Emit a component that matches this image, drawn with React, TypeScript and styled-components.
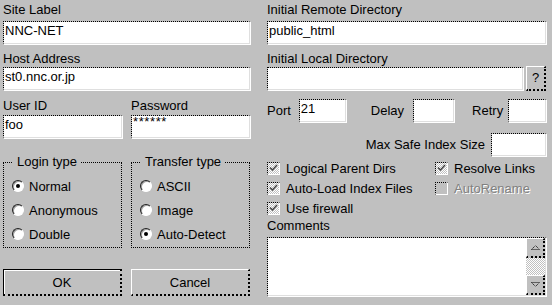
import React from 'react';
import styled, { createGlobalStyle } from 'styled-components';

const Global = createGlobalStyle`
  html, body { margin: 0; padding: 0; background: #c0c0c0; }
  body { font-family: "Liberation Sans", Arial, sans-serif; font-size: 13px; color: #000; }
  * { box-sizing: border-box; }
`;

const checker = 'repeating-conic-gradient(#fff 0 25%, #c0c0c0 0 50%) 0 0 / 2px 2px';

const Dialog = styled.div`
  width: 552px;
  height: 305px;
  display: flex;
  gap: 17px;
  padding: 2px 6px 0 3px;
  background: #c0c0c0;
  overflow: hidden;
`;

const Column = styled.div<{ $w?: number }>`
  display: flex;
  flex-direction: column;
  ${(p) => (p.$w ? `width: ${p.$w}px; flex: none;` : 'flex: 1; min-width: 0;')}
`;

const Label = styled.div<{ $gap?: number; $top?: number }>`
  height: 16px;
  line-height: 16px;
  white-space: nowrap;
  flex: none;
  margin-top: ${(p) => p.$top ?? 0}px;
  margin-bottom: ${(p) => p.$gap ?? 3}px;
`;

const Sunken = styled.div<{ $w?: number; $grow?: boolean }>`
  height: 23px;
  flex: ${(p) => (p.$grow ? '1 1 auto' : 'none')};
  min-width: 0;
  ${(p) => (p.$w ? `width: ${p.$w}px;` : '')}
  background: #fff;
  background-clip: padding-box;
  border-top: 1px dotted #000;
  border-left: 1px dotted #000;
  border-right: 1px solid #dfdfdf;
  border-bottom: 1px solid #dfdfdf;
  box-shadow: 1px 1px 0 #fff;
  padding: 1px 0 0 1px;
  line-height: 16px;
  white-space: nowrap;
  overflow: hidden;
`;

const Masked = styled.span`
  display: block;
  font-size: 13px;
  line-height: 9px;
  letter-spacing: 0.6px;
`;

const Block = styled.div<{ $top?: number }>`
  display: flex;
  flex-direction: column;
  margin-top: ${(p) => p.$top ?? 0}px;
`;

const Pair = styled.div<{ $top?: number }>`
  display: grid;
  grid-template-columns: 1fr 1fr;
  column-gap: 9px;
  margin-top: ${(p) => p.$top ?? 0}px;
`;

const Group = styled.fieldset`
  margin: 0;
  padding: 4px 0 1px 0;
  border: 1px dotted #000;
  min-width: 0;
`;

const Legend = styled.legend`
  margin-left: 9px;
  padding: 0 4px;
  line-height: 16px;
`;

const Option = styled.div`
  height: 24px;
  display: flex;
  align-items: center;
  gap: 5px;
  padding-left: 8px;
  white-space: nowrap;
`;

const Radio = styled.span`
  width: 12px;
  height: 12px;
  flex: none;
  border-radius: 50%;
  background: #fff;
  border: 1px solid;
  border-color: #202020 #fff #fff #202020;
  box-shadow: inset 1px 1px 0 #a0a0a0;
  display: flex;
  align-items: center;
  justify-content: center;
`;

const RadioDot = styled.span`
  width: 4px;
  height: 4px;
  border-radius: 50%;
  background: #000;
`;

const Button = styled.button<{ $default?: boolean }>`
  appearance: none;
  margin: 0;
  padding: 0;
  font: inherit;
  color: #000;
  height: 27px;
  background: #c0c0c0;
  display: flex;
  align-items: center;
  justify-content: center;
  ${(p) =>
    p.$default
      ? `border: 1px solid #000; border-right-width: 2px; border-bottom-width: 2px; border-right-style: dotted; border-bottom-style: dotted; box-shadow: inset 1px 1px 0 #fff;`
      : `border-top: 1px solid #fff; border-left: 1px solid #fff; border-right: 2px dotted #000; border-bottom: 2px dotted #000;`}
`;

const SmallButton = styled.button`
  appearance: none;
  margin: 0;
  padding: 0 0 1px 0;
  font: inherit;
  color: #000;
  width: 20px;
  height: 25px;
  flex: none;
  background: #c0c0c0;
  border-top: 1px solid #fff;
  border-left: 1px solid #fff;
  border-right: 2px dotted #000;
  border-bottom: 2px dotted #000;
`;

const Row = styled.div<{ $top?: number; $gap?: number; $end?: boolean }>`
  display: flex;
  align-items: center;
  gap: ${(p) => p.$gap ?? 0}px;
  margin-top: ${(p) => p.$top ?? 0}px;
  ${(p) => (p.$end ? 'justify-content: flex-end;' : '')}
  white-space: nowrap;
`;

const Inline = styled.span<{ $left?: number }>`
  margin-left: ${(p) => p.$left ?? 0}px;
  line-height: 16px;
`;

const Spaced = styled.div<{ $left?: number; $auto?: boolean }>`
  display: flex;
  margin-left: ${(p) => (p.$auto ? 'auto' : `${p.$left ?? 0}px`)};
`;

const Checks = styled.div`
  display: grid;
  grid-template-columns: 168px 1fr;
  grid-auto-rows: 20px;
  margin-top: 2px;
`;

const CheckItem = styled.div<{ $disabled?: boolean }>`
  display: flex;
  align-items: center;
  gap: 6px;
  white-space: nowrap;
  ${(p) => (p.$disabled ? 'color: #808080; text-shadow: 1px 1px 0 #fff;' : '')}
`;

const Box = styled.span<{ $on?: boolean }>`
  width: 13px;
  height: 13px;
  flex: none;
  display: flex;
  align-items: center;
  justify-content: center;
  border-top: 1px dotted #000;
  border-left: 1px dotted #000;
  border-right: 1px solid #fff;
  border-bottom: 1px solid #fff;
  background: ${(p) => (p.$on ? checker : '#c0c0c0')};
  background-clip: padding-box;
`;

const Memo = styled.div`
  height: 59px;
  flex: none;
  display: flex;
  justify-content: flex-end;
  background: #fff;
  background-clip: padding-box;
  border-top: 1px dotted #000;
  border-left: 1px dotted #000;
  border-right: 1px solid #dfdfdf;
  border-bottom: 1px solid #dfdfdf;
  box-shadow: 1px 1px 0 #fff;
`;

const ScrollBar = styled.div`
  width: 19px;
  display: flex;
  flex-direction: column;
  justify-content: space-between;
  background: ${checker};
`;

const ScrollButton = styled.div`
  height: 20px;
  display: flex;
  align-items: center;
  justify-content: center;
  background: #c0c0c0;
  border-top: 1px solid #fff;
  border-left: 1px solid #fff;
  border-right: 2px dotted #000;
  border-bottom: 2px dotted #000;
`;

const Check = () => (
  <svg width="9" height="8" viewBox="0 0 9 8">
    <path d="M1 3.5 L3.5 6 L8 1" fill="none" stroke="#404040" strokeWidth="1.4" />
  </svg>
);

const Arrow = ({ down }: { down?: boolean }) => (
  <svg width="9" height="5" viewBox="0 0 9 5">
    <path
      d={down ? 'M0.5 0.5 H8.5 L4.5 4.5 Z' : 'M0.5 4.5 H8.5 L4.5 0.5 Z'}
      fill="none"
      stroke="#000"
      strokeWidth="1"
      strokeDasharray="1 1"
    />
  </svg>
);

const RadioOption = ({ label, on }: { label: string; on?: boolean }) => (
  <Option>
    <Radio>{on && <RadioDot />}</Radio>
    {label}
  </Option>
);

const CheckOption = ({ label, on = true, disabled }: { label: string; on?: boolean; disabled?: boolean }) => (
  <CheckItem $disabled={disabled}>
    <Box $on={on}>{on && <Check />}</Box>
    {label}
  </CheckItem>
);

export default function App() {
  return (
    <>
      <Global />
      <Dialog>
        <Column $w={247}>
          <Block>
            <Label>Site Label</Label>
            <Sunken>NNC-NET</Sunken>
          </Block>
          <Block $top={7}>
            <Label $gap={0}>Host Address</Label>
            <Sunken>st0.nnc.or.jp</Sunken>
          </Block>
          <Pair $top={8}>
            <Block>
              <Label $gap={1}>User ID</Label>
              <Sunken>foo</Sunken>
            </Block>
            <Block>
              <Label $gap={1}>Password</Label>
              <Sunken>
                <Masked>******</Masked>
              </Sunken>
            </Block>
          </Pair>
          <Pair $top={16}>
            <Group>
              <Legend>Login type</Legend>
              <RadioOption label="Normal" on />
              <RadioOption label="Anonymous" />
              <RadioOption label="Double" />
            </Group>
            <Group>
              <Legend>Transfer type</Legend>
              <RadioOption label="ASCII" />
              <RadioOption label="Image" />
              <RadioOption label="Auto-Detect" on />
            </Group>
          </Pair>
          <Pair $top={21}>
            <Button $default>OK</Button>
            <Button>Cancel</Button>
          </Pair>
        </Column>
        <Column>
          <Block>
            <Label>Initial Remote Directory</Label>
            <Sunken>public_html</Sunken>
          </Block>
          <Block $top={7}>
            <Label $gap={-1}>Initial Local Directory</Label>
            <Row $gap={3}>
              <Sunken $grow />
              <SmallButton>?</SmallButton>
            </Row>
          </Block>
          <Row $top={8}>
            <Inline>Port</Inline>
            <Spaced $left={8}>
              <Sunken $w={47}>21</Sunken>
            </Spaced>
            <Inline $left={25}>Delay</Inline>
            <Spaced $left={9}>
              <Sunken $w={41} />
            </Spaced>
            <Inline $left={18}>Retry</Inline>
            <Spaced $auto>
              <Sunken $w={38} />
            </Spaced>
          </Row>
          <Row $top={11} $gap={6} $end>
            <Inline>Max Safe Index Size</Inline>
            <Sunken $w={55} />
          </Row>
          <Checks>
            <CheckOption label="Logical Parent Dirs" />
            <CheckOption label="Resolve Links" />
            <CheckOption label="Auto-Load Index Files" />
            <CheckOption label="AutoRename" on={false} disabled />
            <CheckOption label="Use firewall" />
          </Checks>
          <Block>
            <Label>Comments</Label>
            <Memo>
              <ScrollBar>
                <ScrollButton>
                  <Arrow />
                </ScrollButton>
                <ScrollButton>
                  <Arrow down />
                </ScrollButton>
              </ScrollBar>
            </Memo>
          </Block>
        </Column>
      </Dialog>
    </>
  );
}
